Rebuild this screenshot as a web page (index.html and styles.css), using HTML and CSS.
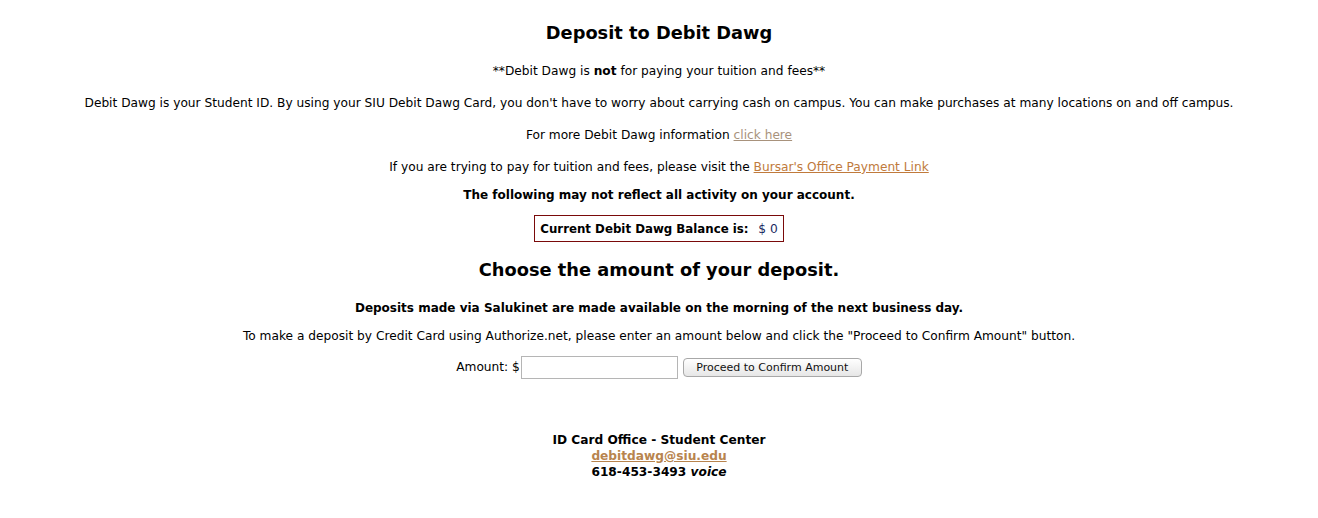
FILE: index.html
```html
<!DOCTYPE html>
<html lang="en">
<head>
  <meta charset="UTF-8">
  <title>Deposit to Debit Dawg</title>
  <link rel="stylesheet" href="styles.css">
</head>
<body>
  <div id="content">
    <h1>Deposit to Debit Dawg</h1>
    <p>**Debit Dawg is <b>not</b> for paying your tuition and fees**</p>
    <p>Debit Dawg is your Student ID. By using your SIU Debit Dawg Card, you don't have to worry about carrying cash on campus. You can make purchases at many locations on and off campus.</p>
    <p>For more Debit Dawg information <a href="#" class="visited">click here</a></p>
    <p class="bursar">If you are trying to pay for tuition and fees, please visit the <a href="#">Bursar's Office Payment Link</a></p>
    <p class="warn first">The following may not reflect all activity on your account.</p>
    <div class="balance"><b>Current Debit Dawg Balance is:</b> <span class="amt">$ 0</span></div>
    <h2>Choose the amount of your deposit.</h2>
    <p class="warn">Deposits made via Salukinet are made available on the morning of the next business day.</p>
    <p class="howto">To make a deposit by Credit Card using Authorize.net, please enter an amount below and click the "Proceed to Confirm Amount" button.</p>
    <form class="deposit" onsubmit="return false">
      <label>Amount: $<input type="text" name="amount"></label>
      <button type="submit">Proceed to Confirm Amount</button>
    </form>
  </div>
  <footer>
    <b>ID Card Office - Student Center</b><br>
    <a href="#"><b>debitdawg@siu.edu</b></a><br>
    <b>618-453-3493 <i>voice</i></b>
  </footer>
</body>
</html>
```

FILE: styles.css
```css
*{box-sizing:border-box}
body{margin:0;padding:0;font-family:"DejaVu Sans",Verdana,sans-serif;font-size:12.2px;color:#000;background:#fff;text-align:center}
#content{padding-top:22px}
h1{font-size:17.8px;margin:0 0 19px;line-height:22px}
h2{font-size:17.8px;margin:0 0 19px;line-height:22px}
p{margin:0 0 16px;line-height:16px}
p.bursar{margin-bottom:12px}
p.warn{font-weight:bold;font-size:12px;margin-bottom:12px}
p.warn.first{margin-bottom:12px}
p.howto{margin-bottom:12px}
a{color:#c07a3c}
a.visited{color:#a8927c}
.balance{display:inline-block;border:1px solid #7a0a0a;padding:5px 5px 4px 5px;line-height:16px;font-size:11.8px;margin-bottom:17px}
.balance .amt{color:#18285e;margin-left:6px;font-size:12.2px}
.deposit{display:flex;justify-content:center;align-items:center;gap:5px}
.deposit input{width:157px;height:23px;border:1px solid #b5b5b5;margin:0 0 0 1px;padding:2px;font:inherit;vertical-align:middle}
.deposit button{height:19px;width:179px;font-family:"DejaVu Sans",sans-serif;font-size:11px;color:#111;border:1px solid #a8a8a8;border-radius:4px;background:linear-gradient(#fff,#e6e6e6);padding:0 4px}
footer{margin-top:53px;line-height:16px}
footer a{color:#b8844e}
```
